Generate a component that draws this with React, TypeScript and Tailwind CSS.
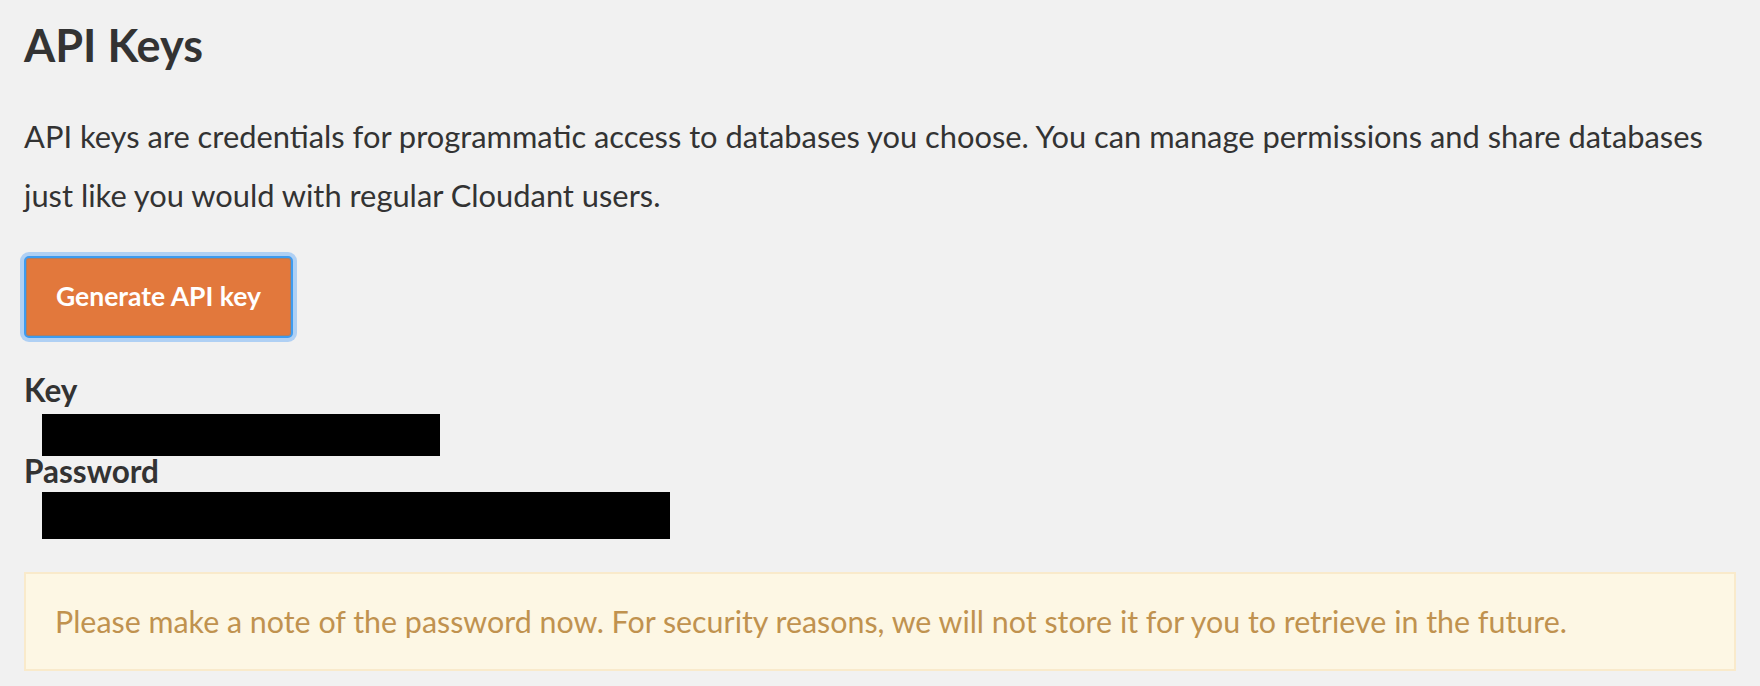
import React from 'react';

export default function App() {
  return (
    <div className="min-h-screen bg-[#f1f1f1] px-6 pt-[23px] font-['Lato',sans-serif] text-[#333]">
      <h1 className="text-[45px] font-bold leading-none">API Keys</h1>

      <p className="mt-[39px] max-w-[1690px] text-[30.85px] leading-[59px]">
        API keys are credentials for programmatic access to databases you choose. You can manage permissions and share databases
        just like you would with regular Cloudant users.
      </p>

      <button
        type="button"
        className="mt-[31px] flex h-[82px] w-[269px] items-center justify-center rounded-[5px] border-2 border-[#3d9bef] bg-[#e2783c] text-[26.5px] font-bold text-white shadow-[0_0_0_4px_rgba(120,180,245,0.55),inset_0_0_0_1px_#a9806a]"
      >
        Generate API key
      </button>

      {/* Credentials, values redacted */}
      <dl className="mt-[37px]">
        <dt className="text-[31.5px] font-bold leading-none">Key</dt>
        <dd className="ml-[18px] mt-[7px] h-[42px] w-[398px] bg-black" />
        <dt className="text-[31.5px] font-bold leading-none">Password</dt>
        <dd className="ml-[18px] mt-[5px] h-[47px] w-[628px] bg-black" />
      </dl>

      <div className="mt-[33px] flex h-[99px] items-center border-2 border-[#f9eacb] bg-[#fdf7e4] px-[29px] text-[30.4px] text-[#c0924f]">
        Please make a note of the password now. For security reasons, we will not store it for you to retrieve in the future.
      </div>
    </div>
  );
}
